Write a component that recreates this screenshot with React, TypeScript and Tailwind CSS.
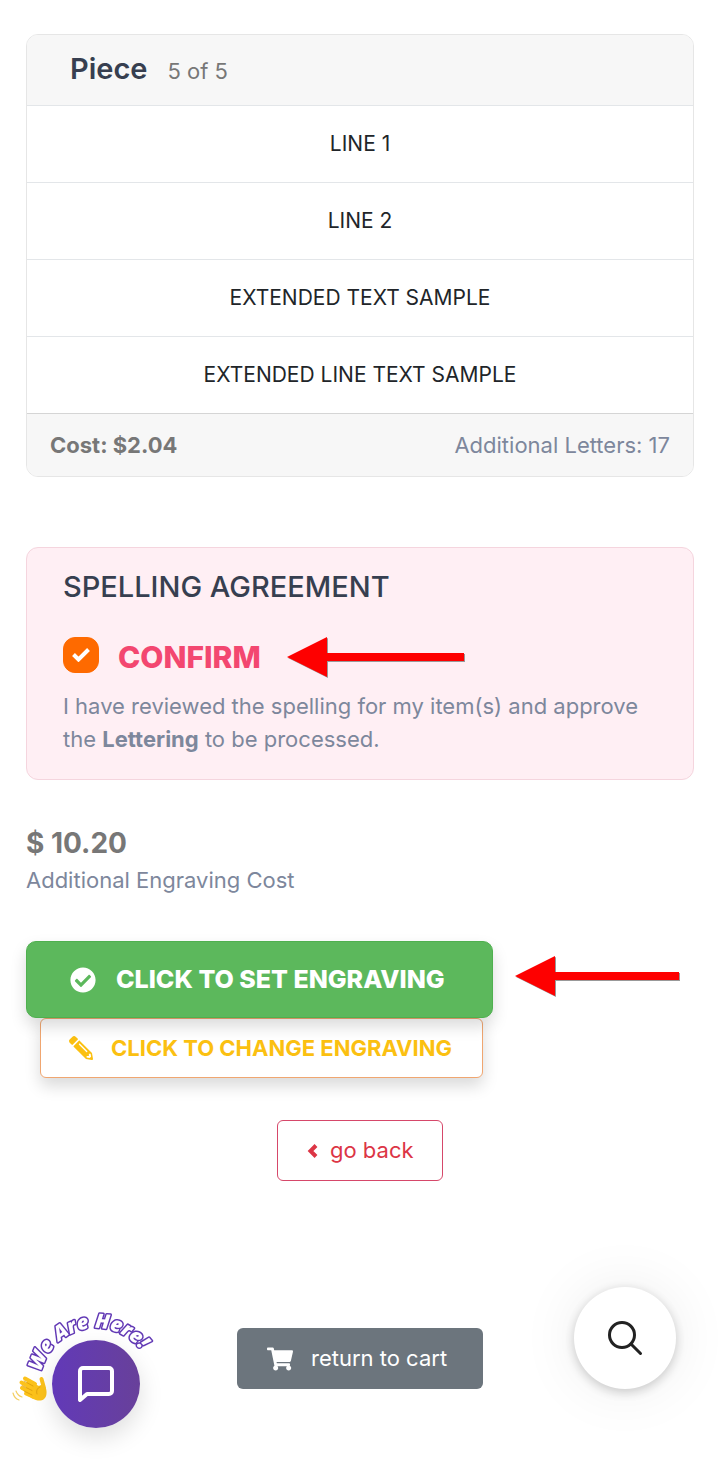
import React, { useState } from "react";
import { FaCheckCircle, FaPencilAlt, FaShoppingCart } from "react-icons/fa";

const lines = ["LINE 1", "LINE 2", "EXTENDED TEXT SAMPLE", "EXTENDED LINE TEXT SAMPLE"];

const Arrow: React.FC<{ length: number }> = ({ length }) => (
  <svg
    width={length}
    height={41}
    viewBox={`0 0 ${length} 41`}
    className="shrink-0"
    aria-hidden="true"
  >
    <path d={`M1 21 41 1v16h${length - 41}v8H41v16z`} fill="#999" />
    <path d={`M0 20 40 0v16h${length - 41}v8H40v16z`} fill="#fe0000" />
  </svg>
);

const PieceCard: React.FC = () => (
  <section className="overflow-hidden rounded-xl border border-[#e6e6e6]">
    <header className="flex h-[70px] items-baseline gap-5 bg-[#f7f7f7] pt-3 pl-[43px]">
      <h2 className="text-[29px] leading-[44px] font-semibold text-[#373f50]">Piece</h2>
      <span className="text-[22px] text-[#777]">5 of 5</span>
    </header>
    <ul>
      {lines.map((line) => (
        <li
          key={line}
          className="flex h-[77px] items-center justify-center border-t border-[#e3e6e9] text-[21px] text-[#212529]"
        >
          {line}
        </li>
      ))}
    </ul>
    <footer className="flex h-[63px] items-center justify-between border-t border-[#d5d5d5] bg-[#f7f7f7] px-[23px] text-[22px]">
      <strong className="font-bold text-[#777]">Cost: $2.04</strong>
      <span className="text-[#7d879c]">Additional Letters: 17</span>
    </footer>
  </section>
);

const SpellingAgreement: React.FC = () => {
  const [confirmed, setConfirmed] = useState(true);

  return (
    <section className="mt-[70px] rounded-xl border border-[#f5d5de] bg-[#ffeff4] px-9 pt-[17px] pb-[23px]">
      <h2 className="text-[29px] leading-[44px] font-medium text-[#373f50]">SPELLING AGREEMENT</h2>
      <div className="mt-[26px] flex items-center gap-[26px]">
        <label className="flex items-center gap-[19px] text-[30px] leading-[44px] font-extrabold text-[#f34770]">
          <span className="mb-1 grid size-9 place-items-center">
            <input
              type="checkbox"
              checked={confirmed}
              onChange={(e) => setConfirmed(e.target.checked)}
              className="col-start-1 row-start-1 size-9 appearance-none rounded-xl border border-[#fe6a00] bg-white checked:bg-[#fe6a00]"
            />
            {confirmed && (
              <svg
                viewBox="0 0 18 14"
                className="pointer-events-none col-start-1 row-start-1 h-3.5 w-[18px]"
                fill="none"
                stroke="#fff"
                strokeWidth="4"
                aria-hidden="true"
              >
                <path d="m1.500 6.500 5 5L16.500 1.500" />
              </svg>
            )}
          </span>
          CONFIRM
        </label>
        <Arrow length={178} />
      </div>
      <p className="mt-[11px] text-[22px] leading-[33px] text-[#7d879c]">
        I have reviewed the spelling for my item(s) and approve the{" "}
        <strong className="font-bold">Lettering</strong> to be processed.
      </p>
    </section>
  );
};

const WavingHand: React.FC = () => (
  <svg viewBox="0 0 36 28" className="absolute top-[75px] left-0 h-7 w-9" aria-hidden="true">
    <path d="M15 5 27 11c2-2 7-1 7.500 5 .500 6-2 9-6 9.500-5 .500-11-3-15-7z" fill="#fcc21b" />
    <g fill="none" stroke="#fcc21b" strokeLinecap="round" strokeWidth="4">
      <path d="M13 3.500 23 9" />
      <path d="M9.500 7.500 20 13" />
      <path d="M10 13 20 18" />
      <path d="M14 18.500 22 22" />
      <path d="M29.500 4 32 13" />
    </g>
    <g fill="none" stroke="#d99a0b" strokeLinecap="round" strokeWidth=".8">
      <path d="m12 6 9 5M10 10.500l10 5M12 16l8 4M28 12c-3 1-4 4-3 7" />
    </g>
    <g fill="none" stroke="#f4cf62" strokeLinecap="round" strokeWidth="1.200">
      <path d="M4 16c1 3 3 5 6 6M1 18c1 4 3 6 6 7" />
    </g>
  </svg>
);

const ChatWidget: React.FC = () => (
  <div className="fixed bottom-[35px] left-3 h-[128px] w-[150px]">
    <svg
      viewBox="0 0 150 128"
      className="absolute inset-0 h-full w-full overflow-visible"
      role="img"
      aria-label="We Are Here!"
    >
      <defs>
        <path id="greeting-arc" d="M28 84a56 56 0 0 1 112 0" />
      </defs>
      <text
        fontFamily="'Open Sans', sans-serif"
        fontSize="20"
        fontWeight="800"
        fontStyle="italic"
        fill="#fff"
        stroke="#6239b5"
        strokeWidth="3"
        strokeLinejoin="round"
        paintOrder="stroke"
      >
        <textPath href="#greeting-arc" startOffset="12">
          We Are Here!
        </textPath>
      </text>
    </svg>
    <WavingHand />
    <button
      type="button"
      aria-label="Open chat"
      className="absolute right-[22px] bottom-0 grid size-[88px] place-items-center rounded-full bg-linear-to-r from-[#6239b8] to-[#68409a] shadow-[0_10px_24px_rgba(0,0,0,0.13)]"
    >
      <svg
        viewBox="0 0 36 36"
        className="size-9"
        fill="none"
        stroke="#fff"
        strokeWidth="4"
        strokeLinejoin="round"
        aria-hidden="true"
      >
        <path d="M2 34V5a3 3 0 0 1 3-3h26a3 3 0 0 1 3 3v20a3 3 0 0 1-3 3H9z" />
      </svg>
    </button>
  </div>
);

const SearchButton: React.FC = () => (
  <button
    type="button"
    aria-label="Search"
    className="fixed right-11 bottom-[74px] grid size-[102px] place-items-center rounded-full bg-white shadow-[0_3px_12px_rgba(0,0,0,0.2),0_0_60px_rgba(0,0,0,0.08)]"
  >
    <svg
      viewBox="0 0 36 36"
      className="size-9"
      fill="none"
      stroke="#222"
      strokeWidth="3"
      strokeLinecap="round"
      aria-hidden="true"
    >
      <circle cx="15" cy="15" r="12.500" />
      <path d="m24 24 9.500 9.500" />
    </svg>
  </button>
);

export default function App() {
  return (
    <main className="min-h-screen bg-white px-[26px] pt-[34px] pb-[74px] font-['Inter',sans-serif]">
      <PieceCard />
      <SpellingAgreement />

      <div className="mt-[43px]">
        <p className="text-[28px] leading-10 font-bold text-[#777]">$ 10.20</p>
        <p className="text-[22px] leading-[34px] text-[#7d879c]">Additional Engraving Cost</p>
      </div>

      <div className="mt-11 flex items-start gap-[22px]">
        <div className="flex flex-col">
          <button
            type="button"
            className="z-10 flex h-[77px] w-[467px] items-center gap-5 rounded-[10px] border border-[#4fb04f] bg-[#5cb85c] pl-[43px] text-[25px] font-extrabold whitespace-nowrap text-white shadow-[0_8px_16px_rgba(0,0,0,0.15)]"
          >
            <FaCheckCircle className="size-[26px]" />
            CLICK TO SET ENGRAVING
          </button>
          <button
            type="button"
            className="ml-3.5 flex h-[60px] w-[443px] items-center gap-[18px] rounded-md border border-[#f0a670] bg-white pl-7 text-[22px] font-bold whitespace-nowrap text-[#fbc011] shadow-[0_8px_16px_rgba(0,0,0,0.15)]"
          >
            <FaPencilAlt className="size-6 -scale-x-100" />
            CLICK TO CHANGE ENGRAVING
          </button>
        </div>
        <div className="pt-[15px]">
          <Arrow length={165} />
        </div>
      </div>

      <div className="mt-[42px] flex flex-col items-center gap-[147px]">
        <button
          type="button"
          className="flex h-[61px] w-[166px] items-center gap-3 rounded-md border border-[#d6486a] pl-[29px] text-[22px] text-[#dc3545]"
        >
          <svg
            viewBox="0 0 11 14"
            className="h-3.5 w-[11px]"
            fill="none"
            stroke="currentColor"
            strokeWidth="4"
            aria-hidden="true"
          >
            <path d="M9 1.500 3.500 7 9 12.500" />
          </svg>
          go back
        </button>
        <a
          href="#cart"
          className="flex h-[61px] w-[246px] items-center gap-[18px] rounded-md bg-[#6c757d] pl-[30px] text-[22px] text-white"
        >
          <FaShoppingCart className="size-[26px]" />
          return to cart
        </a>
      </div>

      <ChatWidget />
      <SearchButton />
    </main>
  );
}
